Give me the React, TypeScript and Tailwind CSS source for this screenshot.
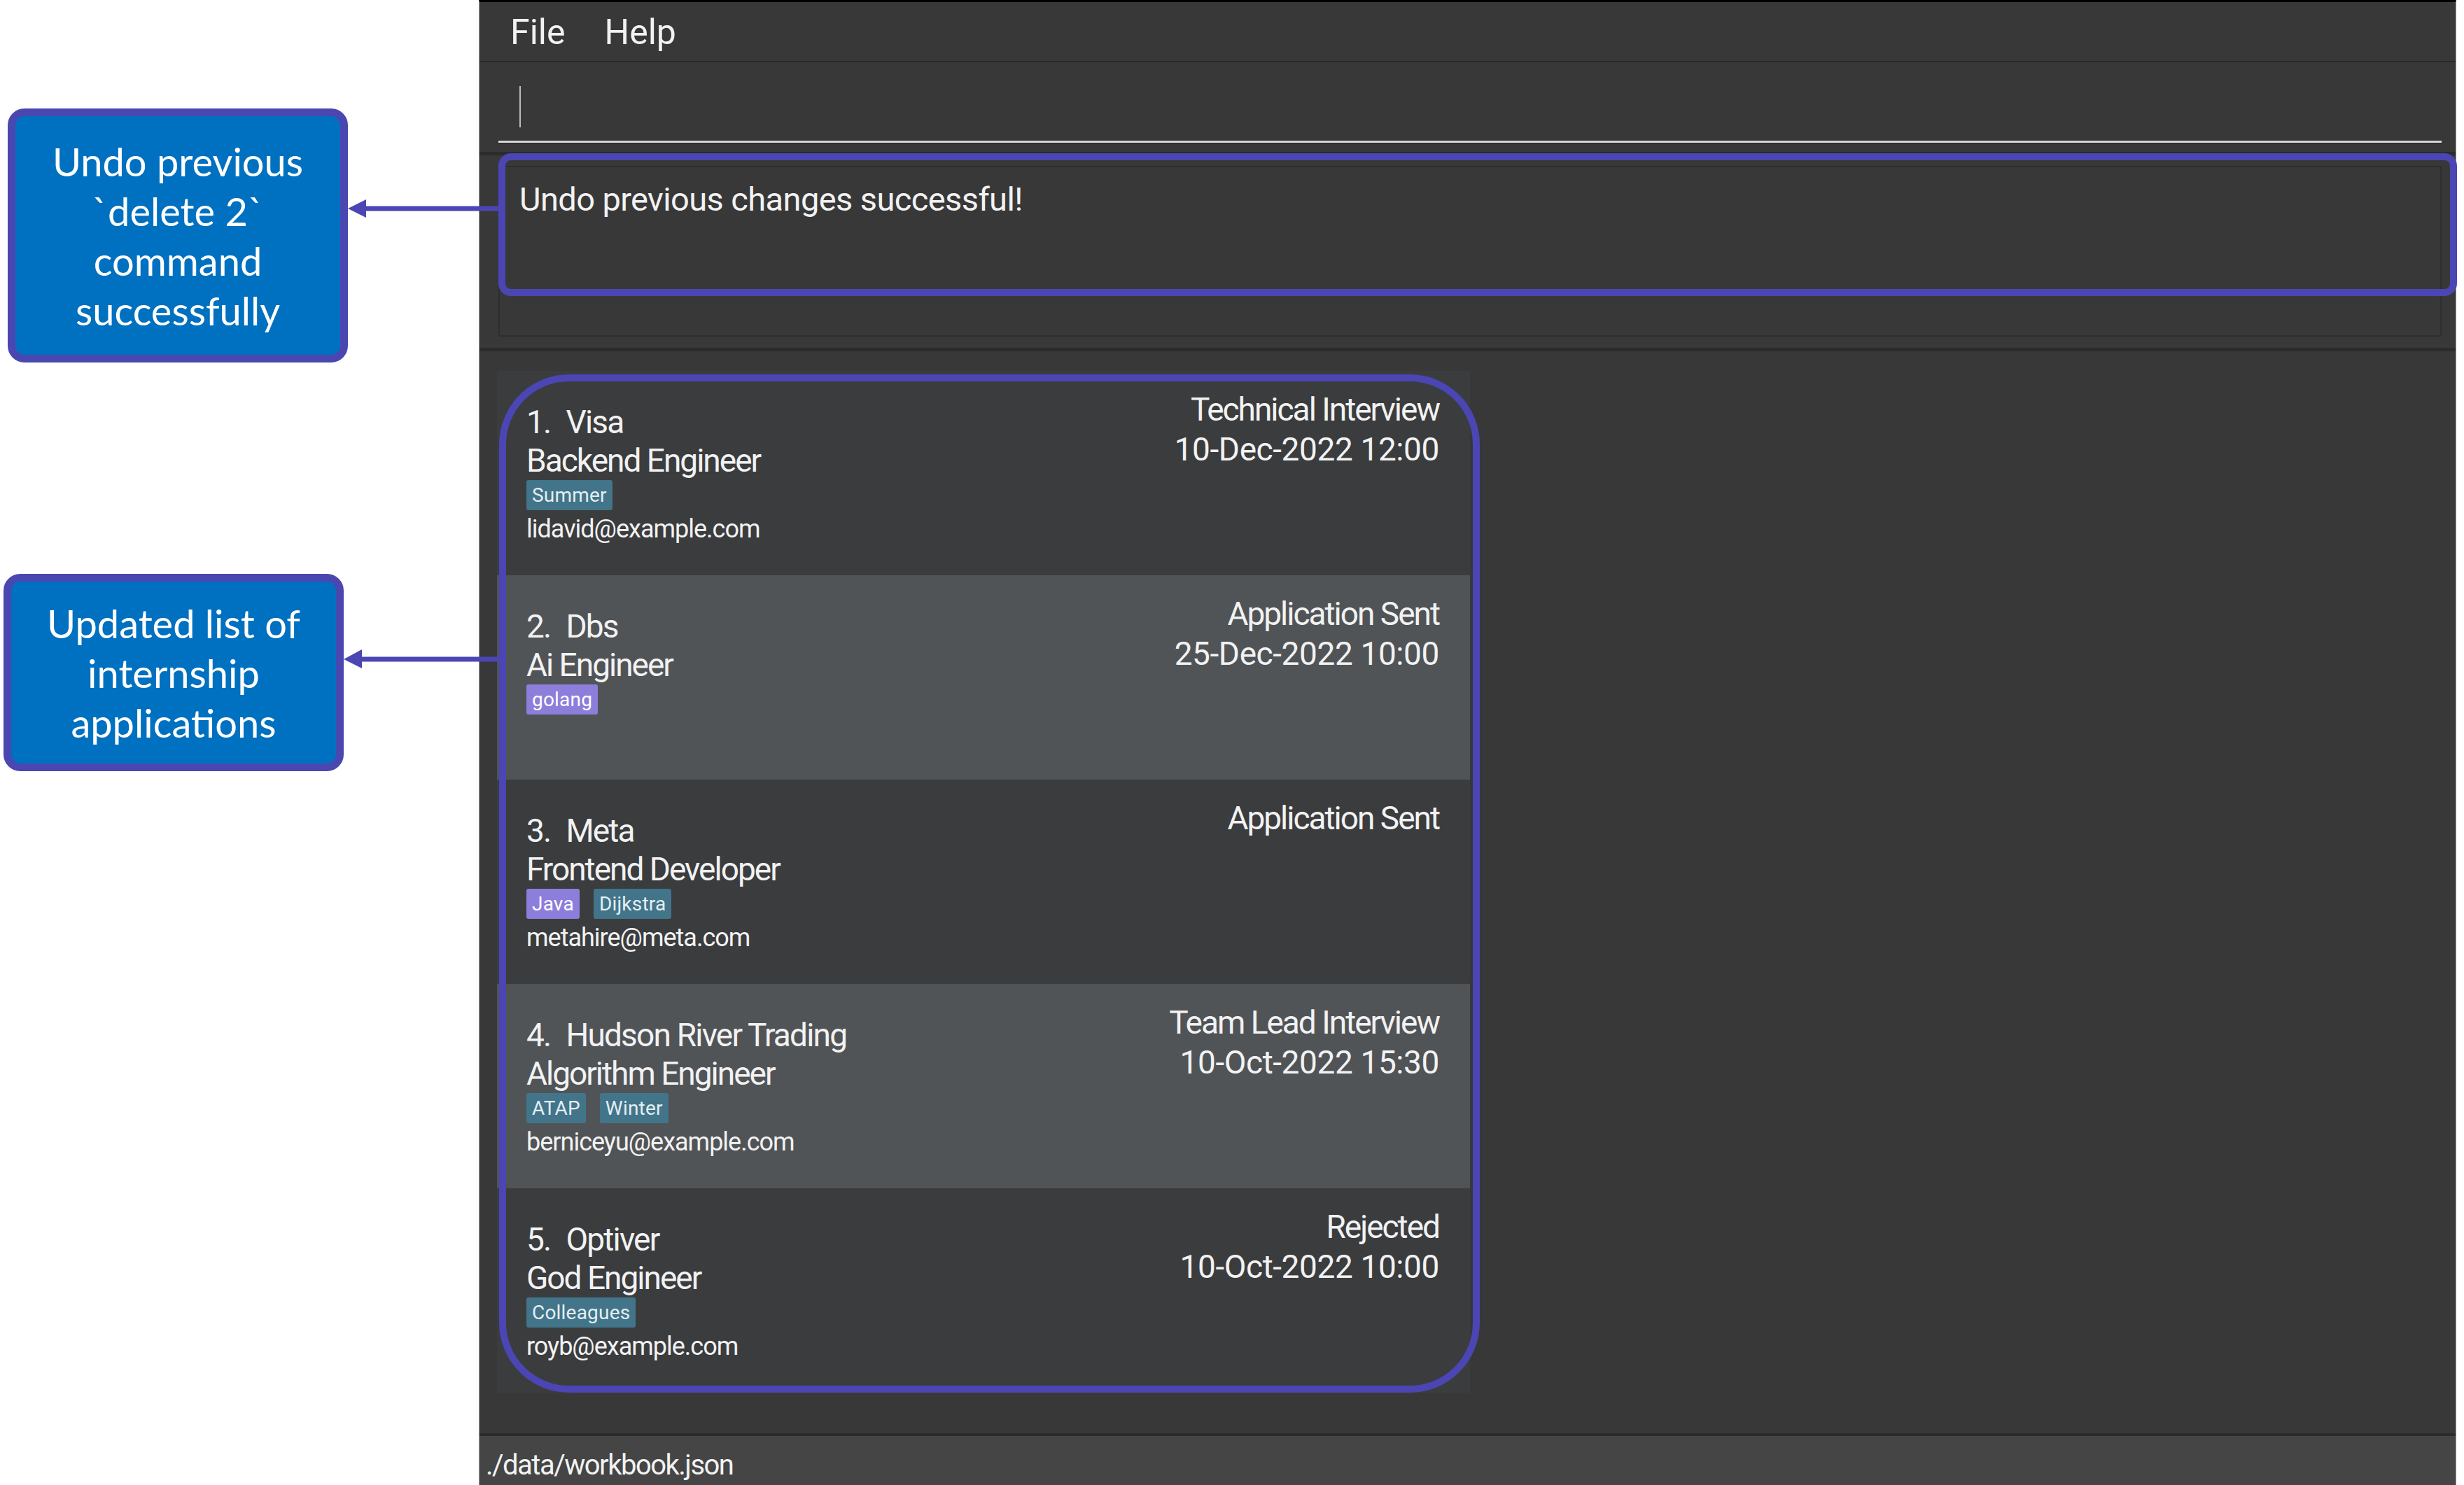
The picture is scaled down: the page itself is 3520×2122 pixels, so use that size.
import React from "react";

type Tag = { label: string; tone: "teal" | "purple" };

type Internship = {
  id: number;
  company: string;
  role: string;
  tags: Tag[];
  email?: string;
  stage: string;
  date?: string;
};

const internships: Internship[] = [
  {
    id: 1,
    company: "Visa",
    role: "Backend Engineer",
    tags: [{ label: "Summer", tone: "teal" }],
    email: "lidavid@example.com",
    stage: "Technical Interview",
    date: "10-Dec-2022 12:00",
  },
  {
    id: 2,
    company: "Dbs",
    role: "Ai Engineer",
    tags: [{ label: "golang", tone: "purple" }],
    stage: "Application Sent",
    date: "25-Dec-2022 10:00",
  },
  {
    id: 3,
    company: "Meta",
    role: "Frontend Developer",
    tags: [
      { label: "Java", tone: "purple" },
      { label: "Dijkstra", tone: "teal" },
    ],
    email: "metahire@meta.com",
    stage: "Application Sent",
  },
  {
    id: 4,
    company: "Hudson River Trading",
    role: "Algorithm Engineer",
    tags: [
      { label: "ATAP", tone: "teal" },
      { label: "Winter", tone: "teal" },
    ],
    email: "berniceyu@example.com",
    stage: "Team Lead Interview",
    date: "10-Oct-2022 15:30",
  },
  {
    id: 5,
    company: "Optiver",
    role: "God Engineer",
    tags: [{ label: "Colleagues", tone: "teal" }],
    email: "royb@example.com",
    stage: "Rejected",
    date: "10-Oct-2022 10:00",
  },
];

const appFont = { fontFamily: "Roboto, 'Noto Sans', sans-serif" };
const noteFont = { fontFamily: "Lato, 'Open Sans', sans-serif" };

function Note({ lines, className }: { lines: string[]; className: string }) {
  return (
    <div
      className={`flex w-[486px] flex-col items-center justify-center rounded-[24px] border-[11px] border-[#4b47b0] bg-[#0070c0] text-center text-[56px] leading-[71px] text-white ${className}`}
      style={noteFont}
    >
      {lines.map((line) => (
        <span key={line} className="whitespace-pre">
          {line}
        </span>
      ))}
    </div>
  );
}

function TagChip({ tag }: { tag: Tag }) {
  return (
    <span
      className={`rounded-[3px] px-[8px] text-[28px] leading-[43px] tracking-[0.2px] ${
        tag.tone === "teal" ? "bg-[#42758a] text-[#e4eef2]" : "bg-[#8d7edb] text-white"
      }`}
    >
      {tag.label}
    </span>
  );
}

function InternshipCard({ item, light }: { item: Internship; light: boolean }) {
  return (
    <div
      className={`flex h-[292px] items-start justify-between pl-[42px] pr-[44px] text-[#f2f2f2] ${
        light ? "bg-[#515457]" : "bg-[#3b3c3e]"
      }`}
    >
      <div className="flex flex-col pt-[46px]">
        <div className="flex gap-[22px] text-[46px] leading-[55px] tracking-[-1.8px]">
          <span>{item.id}.</span>
          <span>{item.company}</span>
        </div>
        <div className="text-[46px] leading-[55px] tracking-[-2px]">{item.role}</div>
        <div className="flex gap-[20px]">
          {item.tags.map((tag) => (
            <TagChip key={tag.label} tag={tag} />
          ))}
        </div>
        {item.email ? (
          <div className="mt-[5px] text-[36px] leading-[44px] tracking-[-1px]">{item.email}</div>
        ) : null}
      </div>
      <div className="flex flex-col items-end pt-[27px] text-[46px] leading-[57px]">
        <span className="tracking-[-2px]">{item.stage}</span>
        {item.date ? <span className="tracking-[-0.4px]">{item.date}</span> : null}
      </div>
    </div>
  );
}

function AppWindow() {
  return (
    <div className="flex h-[2122px] w-[2825px] flex-col border-x border-[#9a9a9a] border-t-[3px] border-t-black bg-[#383838] text-[#f2f2f2]" style={appFont}>
      {/* menu bar */}
      <div className="flex h-[84px] items-center gap-[56px] pl-[44px] pt-[2px] text-[50px]">
        <span>File</span>
        <span>Help</span>
      </div>
      <div className="h-[2px] bg-[#2a2a2a]" />

      {/* command box */}
      <div className="flex h-[128px] flex-col pl-[27px] pr-[20px]">
        <div className="h-[112px] pl-[30px] pt-[34px]">
          <div className="h-[59px] w-[2px] bg-[#bdbdbd]" />
        </div>
        <div className="h-[3px] bg-[#d6d6d6] shadow-[0_1px_0_#242424]" />
      </div>
      <div className="h-[5px] bg-[#2b2b2b]" />

      {/* result display */}
      <div className="flex h-[275px] flex-col pl-[27px] pr-[20px] pt-[15px]">
        <div className="h-[244px] border-2 border-[#2e2e2e] pl-[28px] pt-[18px] text-[47px] leading-[56px] tracking-[-0.6px]">
          Undo previous changes successful!
        </div>
      </div>
      <div className="h-[5px] bg-[#2b2b2b]" />

      {/* internship list */}
      <div className="h-[1546px] pl-[25px] pt-[28px]">
        <div className="flex w-[1390px] flex-col bg-[#3c3d3f]">
          {internships.map((item, i) => (
            <InternshipCard key={item.id} item={item} light={i % 2 === 1} />
          ))}
        </div>
      </div>
      <div className="h-[4px] bg-[#2b2b2b]" />

      {/* status bar */}
      <div className="flex-1 bg-[#454545] pl-[9px] pt-[18px] text-[40px] leading-[48px] tracking-[-1.5px]">
        ./data/workbook.json
      </div>
    </div>
  );
}

export default function App() {
  return (
    <div className="relative flex h-[2122px] w-[3520px] overflow-hidden bg-white">
      <div className="flex w-[684px] shrink-0 flex-col">
        <Note className="ml-[11px] mt-[155px] h-[363px]" lines={["Undo previous", "`delete 2`", "command", "successfully"]} />
        <Note className="ml-[5px] mt-[302px] h-[282px]" lines={["Updated list of", "internship", "applications"]} />
      </div>
      <AppWindow />

      {/* highlights and arrows laid over the screenshot */}
      <div className="pointer-events-none absolute left-[712px] top-[219px] h-[204px] w-[2798px] rounded-[18px] border-[10px] border-[#4b46b4]" />
      <div className="pointer-events-none absolute left-[713px] top-[535px] h-[1455px] w-[1401px] rounded-[100px] border-[10px] border-[#4b46b4]" />
      <svg className="pointer-events-none absolute left-0 top-0" width="3520" height="2122">
        <line x1="520" y1="298" x2="716" y2="298" stroke="#4b46b4" strokeWidth="7" />
        <polygon points="497,298 523,285 523,311" fill="#4b46b4" />
        <line x1="514" y1="942" x2="716" y2="942" stroke="#4b46b4" strokeWidth="7" />
        <polygon points="491,942 517,928 517,955" fill="#4b46b4" />
      </svg>
    </div>
  );
}
